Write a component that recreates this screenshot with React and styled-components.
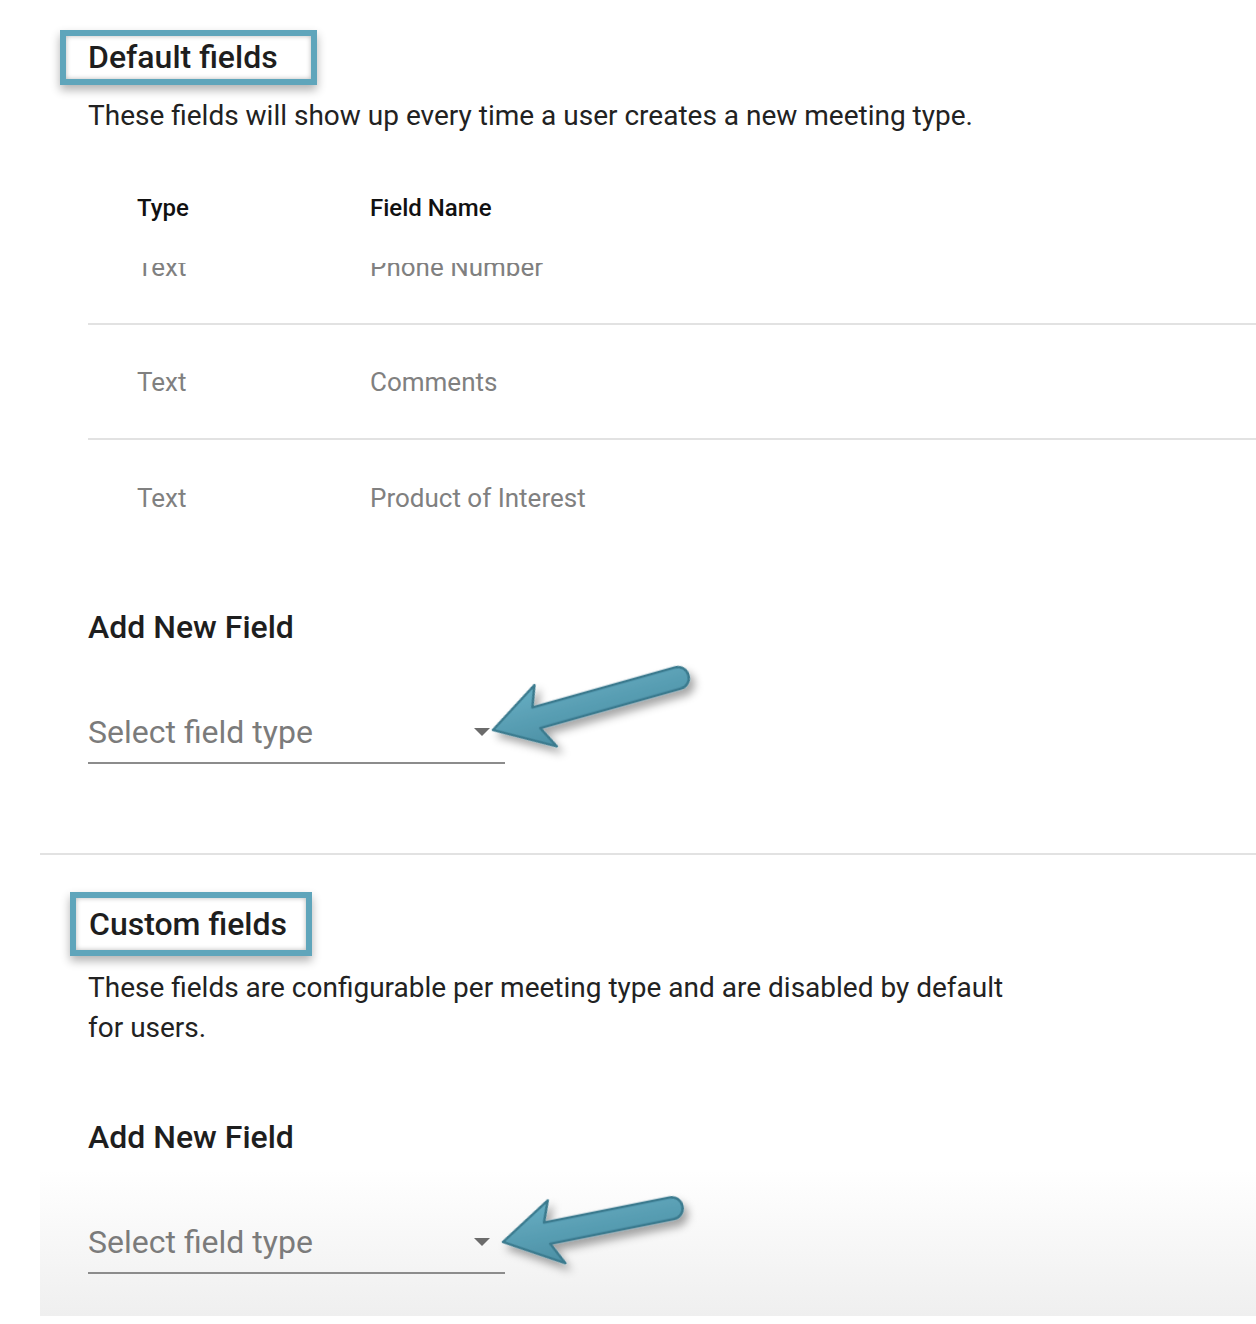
import React, { useEffect, useRef } from "react";
import styled, { createGlobalStyle } from "styled-components";

const GlobalStyle = createGlobalStyle`
  html, body {
    margin: 0;
    padding: 0;
    background: #ffffff;
  }
  body {
    font-family: Roboto, "Noto Sans", "Liberation Sans", sans-serif;
    -webkit-font-smoothing: antialiased;
  }
`;

const Page = styled.div`
  width: 1256px;
  height: 1324px;
  background: #ffffff;
  overflow: hidden;
`;

const Panel = styled.div`
  margin-left: 40px;
  width: 1216px;
  height: 1316px;
  background: linear-gradient(
    to bottom,
    #ffffff 0,
    #ffffff 1170px,
    #efefef 1316px
  );
`;

const Section = styled.section`
  padding-left: 48px;
  padding-top: ${(p) => p.$top}px;
  padding-bottom: ${(p) => p.$bottom || 0}px;
`;

// annotation box drawn round the section title
const TitleBox = styled.div`
  display: inline-block;
  box-sizing: border-box;
  margin-left: ${(p) => -(28 - (p.$shift || 0))}px;
  border: 6px solid #5fa5bb;
  height: ${(p) => p.$height}px;
  padding: 0 ${(p) => p.$padRight}px 0 ${(p) => p.$padLeft}px;
  background: #ffffff;
  box-shadow: 0 5px 9px rgba(0, 0, 0, 0.3),
    inset 0 0 5px rgba(0, 0, 0, 0.28);
`;

const Title = styled.h2`
  margin: 0;
  font-size: 32px;
  font-weight: 500;
  color: #1e1e1e;
  line-height: ${(p) => p.$line}px;
  white-space: nowrap;
`;

const Description = styled.p`
  margin: ${(p) => p.$top}px 0 0 0;
  max-width: 940px;
  font-size: 28px;
  line-height: ${(p) => p.$line || 36}px;
  color: #222222;
  font-weight: 400;
`;

const Table = styled.div`
  margin-top: 60px;
`;

const Row = styled.div`
  display: flex;
  align-items: center;
  box-sizing: border-box;
  height: ${(p) => p.$height}px;
  padding-left: 49px;

  &:not(:last-child) {
    border-bottom: ${(p) => (p.$divided ? "2px solid #e2e2e2" : "none")};
  }
`;

const Cell = styled.div`
  width: ${(p) => (p.$first ? "233px" : "auto")};
  font-size: ${(p) => (p.$head ? "24px" : "26px")};
  font-weight: ${(p) => (p.$head ? 500 : 400)};
  color: ${(p) => (p.$head ? "#111111" : "#808080")};
  white-space: nowrap;
`;

// list scrolled a little, so the first row is cut at its top
const ScrollBody = styled.div`
  margin-top: 41px;
  height: 292px;
  overflow: hidden;
`;

const SubTitle = styled.h3`
  margin: ${(p) => p.$top}px 0 0 0;
  font-size: 32px;
  font-weight: 500;
  line-height: 36px;
  color: #1e1e1e;
`;

const SelectWrap = styled.div`
  position: relative;
  width: 417px;
  margin-top: 67px;
  padding-bottom: 10px;
  border-bottom: 2px solid #8c8c8c;
`;

const Placeholder = styled.div`
  font-size: 32px;
  line-height: 40px;
  color: #7b7b7b;
`;

const Caret = styled.span`
  position: absolute;
  right: 15px;
  top: 16px;
  width: 0;
  height: 0;
  border-left: 8px solid transparent;
  border-right: 8px solid transparent;
  border-top: 8px solid #6b6b6b;
`;

const ArrowSvg = styled.svg`
  position: absolute;
  left: ${(p) => p.$left}px;
  top: ${(p) => p.$top}px;
  overflow: visible;
  pointer-events: none;
`;

const Divider = styled.hr`
  margin: 0;
  border: none;
  border-top: 2px solid #e2e2e2;
`;

function Arrow({ left, top, angle, length, id }) {
  return (
    <ArrowSvg $left={left} $top={top} width="240" height="110" viewBox="0 0 240 110">
      <defs>
        <linearGradient id={`fill-${id}`} x1="0" y1="0" x2="0" y2="1">
          <stop offset="0" stopColor="#66adc2" />
          <stop offset="1" stopColor="#4b8fa4" />
        </linearGradient>
        <filter id={`shadow-${id}`} x="-30%" y="-60%" width="160%" height="220%">
          <feDropShadow dx="3" dy="7" stdDeviation="4" floodColor="#000" floodOpacity="0.35" />
        </filter>
      </defs>
      <g transform={`translate(10 80) rotate(${angle})`} filter={`url(#shadow-${id})`}>
        <path
          d={`M0 0 L52 -32 L44 -11 L${length} -11 A11 11 0 0 1 ${length} 11 L46 11 L57 33 Z`}
          fill={`url(#fill-${id})`}
          stroke="#3a7a8e"
          strokeWidth="2.5"
          strokeLinejoin="round"
        />
      </g>
    </ArrowSvg>
  );
}

function SelectField({ arrow }) {
  return (
    <SelectWrap>
      <Placeholder>Select field type</Placeholder>
      <Caret />
      <Arrow {...arrow} />
    </SelectWrap>
  );
}

const rows = [
  { type: "Text", name: "Phone Number" },
  { type: "Text", name: "Comments" },
  { type: "Text", name: "Product of Interest" },
];

export default function App() {
  const bodyRef = useRef(null);

  useEffect(() => {
    if (bodyRef.current) bodyRef.current.scrollTop = 53;
  }, []);

  return (
    <Page>
      <GlobalStyle />
      <Panel>
        <Section $top={30} $bottom={89}>
          <TitleBox $height={55} $padLeft={22} $padRight={33}>
            <Title $line={43}>Default fields</Title>
          </TitleBox>
          <Description $top={13}>
            These fields will show up every time a user creates a new meeting type.
          </Description>

          <Table>
            <Row $height={28}>
              <Cell $first $head>Type</Cell>
              <Cell $head>Field Name</Cell>
            </Row>
            <ScrollBody ref={bodyRef}>
              {rows.map((r) => (
                <Row key={r.name} $height={115} $divided>
                  <Cell $first>{r.type}</Cell>
                  <Cell>{r.name}</Cell>
                </Row>
              ))}
            </ScrollBody>
          </Table>

          <SubTitle $top={54}>Add New Field</SubTitle>
          <SelectField arrow={{ id: "a1", left: 395, top: -62, angle: -15.7, length: 192 }} />
        </Section>

        <Divider />

        <Section $top={37}>
          <TitleBox $shift={10} $height={64} $padLeft={13} $padRight={19}>
            <Title $line={52}>Custom fields</Title>
          </TitleBox>
          <Description $top={12} $line={40}>
            These fields are configurable per meeting type and are disabled by default for users.
          </Description>

          <SubTitle $top={71}>Add New Field</SubTitle>
          <SelectField arrow={{ id: "a2", left: 405, top: -60, angle: -11.3, length: 172 }} />
        </Section>
      </Panel>
    </Page>
  );
}
